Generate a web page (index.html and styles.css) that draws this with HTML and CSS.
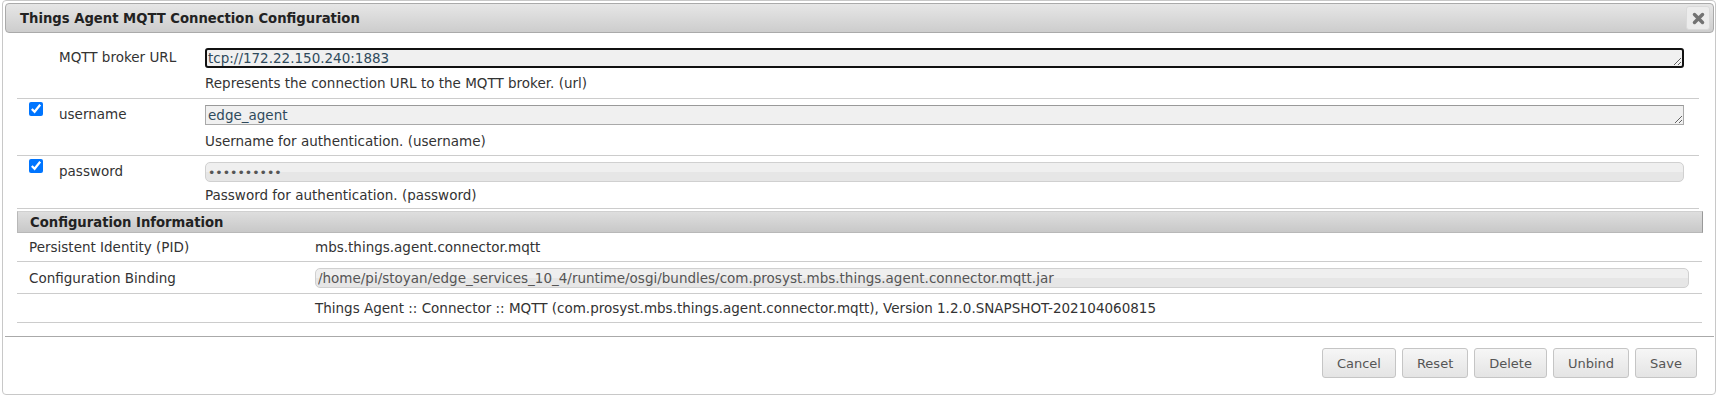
FILE: index.html
```html
<!DOCTYPE html>
<html>
<head>
<meta charset="utf-8">
<title>Things Agent MQTT Connection Configuration</title>
<link rel="stylesheet" href="styles.css">
</head>
<body>
<div class="dialog">
  <div class="titlebar">
    <span class="title">Things Agent MQTT Connection Configuration</span>
    <button class="close" type="button" aria-label="close">
      <svg width="13" height="13" viewBox="0 0 12 12"><path d="M2.3 2.3L9.7 9.7M9.7 2.3L2.3 9.7" stroke="#737373" stroke-width="3.2" stroke-linecap="round"/></svg>
    </button>
  </div>

  <div class="props">
    <div class="prop row-url">
      <div class="chk"></div>
      <div class="label">MQTT broker URL</div>
      <div class="field">
        <textarea class="ta focused" rows="1">tcp://172.22.150.240:1883</textarea>
        <div class="desc">Represents the connection URL to the MQTT broker. (url)</div>
      </div>
    </div>
    <div class="prop row-user">
      <div class="chk"><input type="checkbox" checked></div>
      <div class="label">username</div>
      <div class="field">
        <textarea class="ta" rows="1">edge_agent</textarea>
        <div class="desc">Username for authentication. (username)</div>
      </div>
    </div>
    <div class="prop row-pass">
      <div class="chk"><input type="checkbox" checked></div>
      <div class="label">password</div>
      <div class="field">
        <input class="pw" type="password" value="xxxxxxxxxx">
        <div class="desc">Password for authentication. (password)</div>
      </div>
    </div>
  </div>

  <div class="info">
    <div class="info-head">Configuration Information</div>
    <div class="info-row r-pid">
      <div class="info-label">Persistent Identity (PID)</div>
      <div class="info-value">mbs.things.agent.connector.mqtt</div>
    </div>
    <div class="info-row r-bind">
      <div class="info-label">Configuration Binding</div>
      <div class="info-value"><input class="bind" type="text" readonly value="/home/pi/stoyan/edge_services_10_4/runtime/osgi/bundles/com.prosyst.mbs.things.agent.connector.mqtt.jar"></div>
    </div>
    <div class="info-row r-ver">
      <div class="info-label"></div>
      <div class="info-value">Things Agent :: Connector :: MQTT (com.prosyst.mbs.things.agent.connector.mqtt), Version 1.2.0.SNAPSHOT-202104060815</div>
    </div>
  </div>

  <div class="footer">
    <button class="btn" type="button">Cancel</button>
    <button class="btn" type="button">Reset</button>
    <button class="btn" type="button">Delete</button>
    <button class="btn" type="button">Unbind</button>
    <button class="btn" type="button">Save</button>
  </div>
</div>
</body>
</html>
```

FILE: styles.css
```css
* { box-sizing: border-box; }

html, body {
  margin: 0;
  padding: 0;
  background: #ffffff;
}

body {
  font-family: "DejaVu Sans", Verdana, sans-serif;
  font-size: 13.5px;
  color: #333333;
}

.dialog {
  margin-left: 2px;
  width: 1714px;
  height: 395px;
  border: 1px solid #c8c8c8;
  border-radius: 4px;
  padding: 2px 1px 2px 2px;
  display: flex;
  flex-direction: column;
  background: #ffffff;
}

.titlebar {
  height: 30px;
  border: 1px solid #aaaaaa;
  border-radius: 4px;
  background: linear-gradient(#e6e6e6, #cdcdcd);
  display: flex;
  align-items: center;
  justify-content: space-between;
  padding: 0 3px 0 14px;
}

.title {
  font-weight: bold;
  font-size: 13.2px;
  color: #222222;
}

.close {
  width: 24px;
  height: 24px;
  border: 1px solid #dadada;
  border-radius: 3px;
  background: #ececec;
  padding: 0;
  display: flex;
  align-items: center;
  justify-content: center;
}

.props {
  margin: 0 15px 0 12px;
}

.prop {
  display: grid;
  grid-template-columns: 42px 146px 1fr;
  border-bottom: 1px solid #cccccc;
  padding-right: 15px;
}

.row-url { padding-top: 15px; padding-bottom: 7px; }
.row-url .desc { margin-top: 7px; }
.row-user { padding-top: 6px; padding-bottom: 6px; }
.row-user .desc { margin-top: 8px; }
.row-pass { padding-top: 6px; padding-bottom: 5px; }
.row-pass .desc { margin-top: 5px; }

.chk input {
  margin: -3px 0 0 12px;
  width: 14px;
  height: 14px;
  display: block;
}

.label {
  line-height: 17px;
  margin-top: 1px;
  height: 16px;
  color: #333333;
}

.field {
  display: flex;
  flex-direction: column;
}

.desc {
  line-height: 16px;
  height: 16px;
  color: #333333;
}

.ta {
  display: block;
  width: 100%;
  height: 20px;
  margin: 0;
  padding: 1px 2px;
  font-family: "DejaVu Sans", Verdana, sans-serif;
  font-size: 13.5px;
  line-height: 16px;
  color: #2f4a5c;
  background: #f0f0f0;
  border: 1px solid #a9a9a9;
  border-top-color: #999999;
  border-radius: 0;
  overflow: hidden;
  resize: both;
  outline: none;
}

.ta.focused {
  border: 2px solid #111111;
  border-radius: 3px;
  padding: 0 1px;
}

.pw, .bind {
  display: block;
  width: 100%;
  height: 20px;
  margin: 0;
  padding: 0 2px;
  font-family: "DejaVu Sans", Verdana, sans-serif;
  font-size: 13.5px;
  border: 1px solid #d0d0d0;
  border-radius: 5px;
  background: linear-gradient(#efefef 0%, #efefef 50%, #e6e6e6 50%, #e6e6e6 100%);
  outline: none;
}

.pw {
  color: #555555;
  font-size: 12.5px;
  letter-spacing: 0;
}

.bind {
  color: #555555;
}

.info {
  margin: 2px 11px 0 12px;
}

.info-head {
  height: 22px;
  border: 1px solid #b8b8b8;
  border-right-color: #999999;
  border-top-color: #d0d0d0;
  background: linear-gradient(#dedede, #c8c8c8);
  font-weight: bold;
  font-size: 13.2px;
  color: #222222;
  display: flex;
  align-items: center;
  padding-left: 12px;
}

.info-row {
  display: grid;
  grid-template-columns: 298px 1fr;
  align-items: center;
  border-bottom: 1px solid #cccccc;
  margin-right: 1px;
}

.info-label {
  padding-left: 12px;
  line-height: 16px;
}

.info-value {
  line-height: 16px;
  padding-right: 13px;
}

.r-pid { height: 29px; }
.r-bind { height: 32px; }
.r-ver { height: 29px; }

.footer {
  margin-top: 13px;
  border-top: 1px solid #aaaaaa;
  display: flex;
  justify-content: flex-end;
  gap: 6px;
  padding: 11px 17px 0 0;
}

.btn {
  height: 30px;
  padding: 0 14px;
  font-family: "DejaVu Sans", Verdana, sans-serif;
  font-size: 13px;
  color: #555555;
  background: linear-gradient(#f6f6f6, #e4e4e4);
  border: 1px solid #c5c5c5;
  border-radius: 3px;
}
```
